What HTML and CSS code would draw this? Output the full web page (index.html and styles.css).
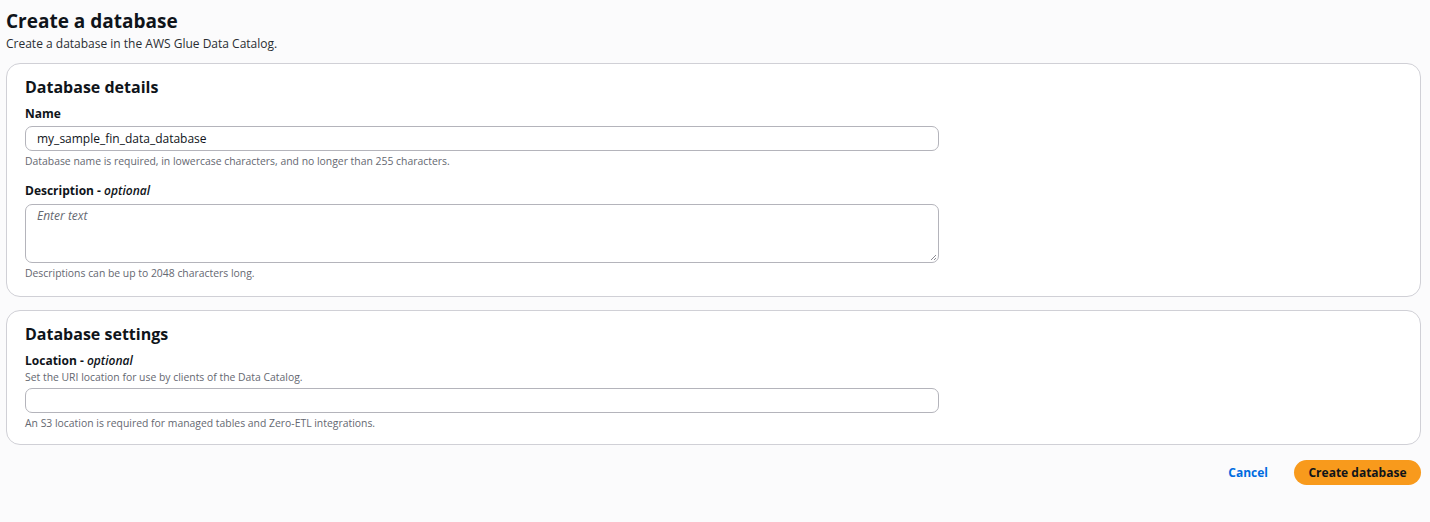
FILE: index.html
```html
<!DOCTYPE html>
<html>
<head>
<meta charset="utf-8">
<link rel="stylesheet" href="styles.css">
</head>
<body>
<div class="page">
  <header class="page-header">
    <h1 class="title">Create a database</h1>
    <p class="subtitle">Create a database in the AWS Glue Data Catalog.</p>
  </header>

  <section class="card">
    <h2 class="card-title">Database details</h2>
    <div class="field">
      <label class="label">Name</label>
      <div class="input">my_sample_fin_data_database</div>
      <div class="hint">Database name is required, in lowercase characters, and no longer than 255 characters.</div>
    </div>
    <div class="field field-gap">
      <label class="label">Description - <i>optional</i></label>
      <div class="textarea">
        <span class="placeholder">Enter text</span>
        <svg class="grip" width="8" height="8" viewBox="0 0 8 8"><path d="M7 2 L2 7 M7 5 L5 7" stroke="#8c8c94" stroke-width="1" fill="none"/></svg>
      </div>
      <div class="hint">Descriptions can be up to 2048 characters long.</div>
    </div>
  </section>

  <section class="card card2">
    <h2 class="card-title">Database settings</h2>
    <div class="field">
      <label class="label">Location - <i>optional</i></label>
      <div class="desc">Set the URI location for use by clients of the Data Catalog.</div>
      <div class="input"></div>
      <div class="hint">An S3 location is required for managed tables and Zero-ETL integrations.</div>
    </div>
  </section>

  <div class="actions">
    <a class="cancel">Cancel</a>
    <button class="primary">Create database</button>
  </div>
</div>
</body>
</html>
```

FILE: styles.css
```css
html, body {
  margin: 0;
  padding: 0;
  background: #fbfbfc;
}
body {
  font-family: "Open Sans", "Noto Sans", sans-serif;
  color: #0f141a;
}
.page {
  padding: 9px 9px 0 6px;
}
.title {
  margin: 0;
  font-size: 19px;
  line-height: 24px;
  font-weight: 700;
}
.subtitle {
  margin: 3px 0 0;
  font-size: 12px;
  line-height: 16px;
  color: #2a2e33;
}
.card {
  margin-top: 11px;
  background: #ffffff;
  border: 1px solid #d0d0d6;
  border-radius: 14px;
  padding: 11px 18px 16px 18px;
}
.card2 {
  margin-top: 13px;
  padding-bottom: 14px;
}
.card-title {
  margin: 0;
  font-size: 16px;
  line-height: 24px;
  font-weight: 700;
}
.field {
  margin-top: 7px;
}
.field-gap {
  margin-top: 15px;
}
.label {
  display: block;
  font-size: 12px;
  line-height: 16px;
  font-weight: 700;
}
.label i {
  font-weight: 600;
}
.desc {
  margin-top: 2px;
  font-size: 10.4px;
  line-height: 13px;
  color: #656871;
}
.input {
  margin-top: 4px;
  width: 914px;
  height: 25px;
  box-sizing: border-box;
  border: 1px solid #b4b4bb;
  border-radius: 7px;
  padding: 0 11px;
  font-size: 12px;
  line-height: 23px;
  color: #0f141a;
}
.textarea {
  position: relative;
  margin-top: 5px;
  width: 914px;
  height: 59px;
  box-sizing: border-box;
  border: 1px solid #b4b4bb;
  border-radius: 7px;
  padding: 3px 11px;
  font-size: 12px;
  line-height: 16px;
}
.placeholder {
  font-style: italic;
  color: #656871;
}
.grip {
  position: absolute;
  right: 1px;
  bottom: 1px;
}
.hint {
  margin-top: 4px;
  font-size: 10.4px;
  line-height: 13px;
  color: #656871;
}
.actions {
  display: flex;
  justify-content: flex-end;
  align-items: center;
  gap: 26px;
  margin-top: 15px;
}
.cancel {
  font-size: 12px;
  font-weight: 700;
  color: #006ce0;
  cursor: pointer;
}
.primary {
  font-family: "Open Sans", "Noto Sans", sans-serif;
  font-size: 12px;
  font-weight: 700;
  color: #0f141a;
  background: #f89a1c;
  border: none;
  border-radius: 13px;
  height: 25px;
  width: 127px;
  padding: 0;
}
```
